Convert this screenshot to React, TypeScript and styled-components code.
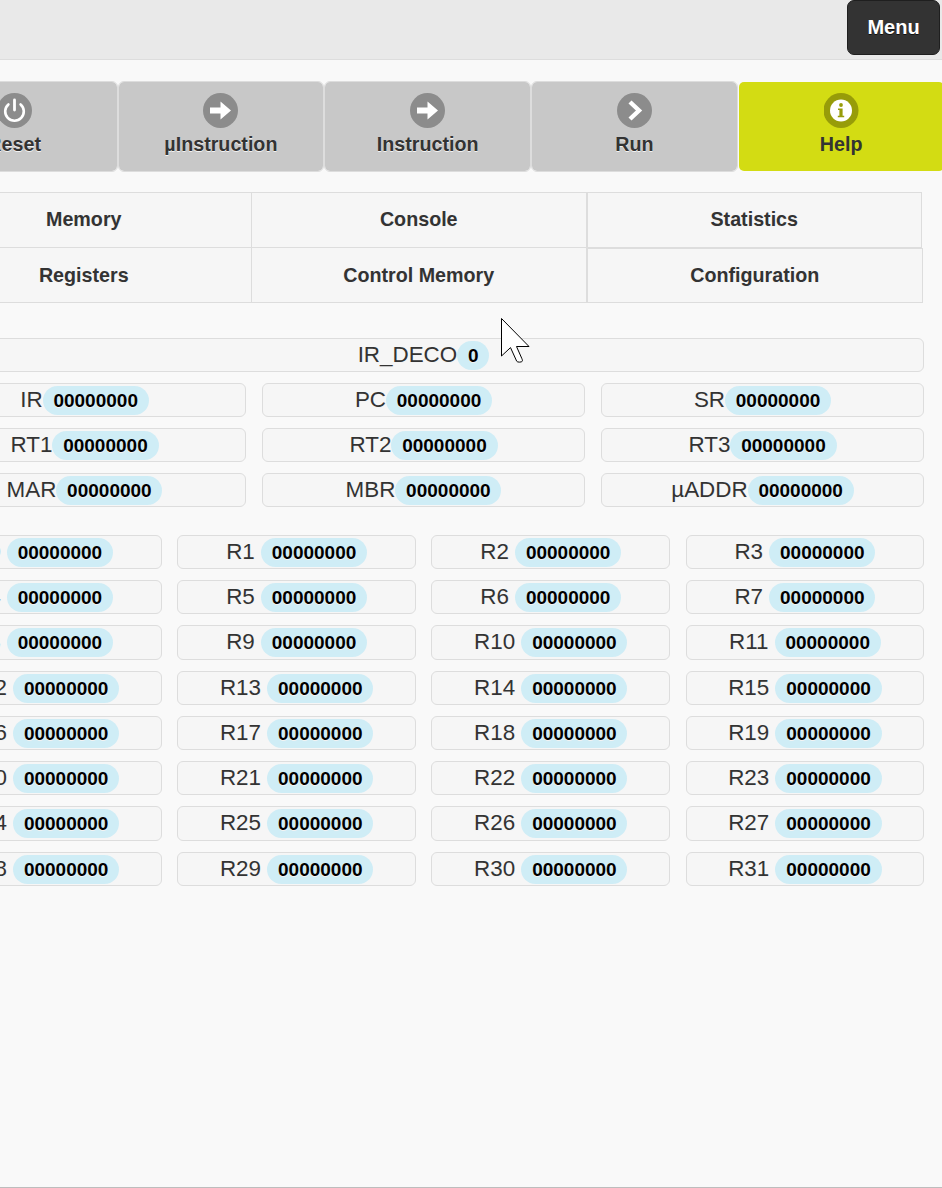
import React from "react"
import styled, { createGlobalStyle } from "styled-components"

const GlobalStyle = createGlobalStyle`
    html, body {
        margin: 0;
        padding: 0;
        background: #f9f9f9;
    }
    body {
        font-family: "Liberation Sans", Arial, sans-serif;
        color: #333;
        text-shadow: 0 1px 0 #f3f3f3;
    }
`;

const upperRegisters = ["IR", "PC", "SR", "RT1", "RT2", "RT3", "MAR", "MBR", "µADDR"]
const generalRegisters = Array.from({ length: 32 }, (_, i) => `R${i}`)

const PowerIcon = () => (
    <svg width="35" height="35" viewBox="0 0 35 35">
        <circle cx="17.5" cy="17.5" r="17.5" fill="#8c8c8c" />
        <path d="M11.4 11.4a9.3 9.3 0 1 0 12.2 0" fill="none" stroke="#fff" strokeWidth="2.6" strokeLinecap="round" />
        <path d="M17.5 7v10" fill="none" stroke="#fff" strokeWidth="2.8" strokeLinecap="round" />
    </svg>
)

const ArrowIcon = () => (
    <svg width="35" height="35" viewBox="0 0 35 35">
        <circle cx="17.5" cy="17.5" r="17.5" fill="#8c8c8c" />
        <path d="M7 14.5h10.5V8.5l10.5 9-10.5 9v-6H7z" fill="#fff" />
    </svg>
)

const ChevronIcon = () => (
    <svg width="35" height="35" viewBox="0 0 35 35">
        <circle cx="17.5" cy="17.5" r="17.5" fill="#8c8c8c" />
        <path d="M13 9l9 8.5-9 8.5" fill="none" stroke="#fff" strokeWidth="4.4" strokeLinejoin="miter" />
    </svg>
)

const InfoIcon = () => (
    <svg width="35" height="35" viewBox="0 0 35 35">
        <circle cx="17" cy="17.5" r="17.5" fill="#979c09" />
        <circle cx="17" cy="17.5" r="11" fill="#fff" />
        <circle cx="17" cy="12" r="1.9" fill="#979c09" />
        <path d="M14 15.5h4.6v7.2h1.6v1.6h-6.4v-1.6h1.600v-5.600h-1.400z" fill="#979c09" />
    </svg>
)

const App: React.FC = () => {
    return (
        <Viewport>
            <GlobalStyle />
            <Page>
                <Header>
                    <MenuButton>Menu</MenuButton>
                </Header>

                <Toolbar>
                    <ToolButton><PowerIcon />Reset</ToolButton>
                    <ToolButton><ArrowIcon />µInstruction</ToolButton>
                    <ToolButton><ArrowIcon />Instruction</ToolButton>
                    <ToolButton><ChevronIcon />Run</ToolButton>
                    <ToolButton $help><InfoIcon />Help</ToolButton>
                </Toolbar>

                <Tabs>
                    <TabRow>
                        <Tab>Memory</Tab>
                        <Tab>Console</Tab>
                        <Tab $last>Statistics</Tab>
                    </TabRow>
                    <TabRow $wide>
                        <Tab $lower>Registers</Tab>
                        <Tab $lower>Control Memory</Tab>
                        <Tab $lower $last>Configuration</Tab>
                    </TabRow>
                </Tabs>

                <UpperGrid>
                    <RegisterRow $full>
                        IR_DECO<Pill>0</Pill>
                    </RegisterRow>
                    {upperRegisters.map((name) => (
                        <RegisterRow key={name}>
                            {name}<Pill>00000000</Pill>
                        </RegisterRow>
                    ))}
                </UpperGrid>

                <LowerGrid>
                    {generalRegisters.map((name) => (
                        <RegisterRow key={name}>
                            {name} <Pill>00000000</Pill>
                        </RegisterRow>
                    ))}
                </LowerGrid>
            </Page>

            <Cursor width="32" height="48" viewBox="0 0 32 48">
                <path
                    d="M1.5 1.5V39l9-8.4 6.2 13.6c.6 1.3 5 1.2 5.6 0 .4-.8-.2-2-.6-3L16.5 29.5H29z"
                    fill="#fff"
                    stroke="#000"
                    strokeWidth="1"
                />
            </Cursor>
        </Viewport>
    )
}

const Viewport = styled.div`
    position: relative;
    box-sizing: border-box;
    height: 1188px;
    overflow: hidden;
    border-bottom: 1px solid #bdbdbd;
`;

const Page = styled.div`
    display: flex;
    flex-direction: column;
    width: 1033.75px;
    margin-left: -90.25px;
`;

const Header = styled.header`
    box-sizing: border-box;
    display: flex;
    justify-content: flex-end;
    align-items: flex-start;
    height: 60px;
    padding-right: 3.5px;
    background: #e9e9e9;
    border-bottom: 1px solid #ddd;
`;

const MenuButton = styled.button`
    box-sizing: border-box;
    width: 93px;
    height: 55px;
    padding: 0;
    background: #333;
    color: #fff;
    border: 1px solid #1f1f1f;
    border-radius: 7px;
    font-family: inherit;
    font-size: 20px;
    font-weight: bold;
    text-shadow: 0 1px 0 #111;
`;

const Toolbar = styled.nav`
    display: flex;
    margin: 21px 0 0 1px;
`;

const ToolButton = styled.button<{ $help?: boolean }>`
    box-sizing: border-box;
    flex: 0 0 206.75px;
    display: flex;
    flex-direction: column;
    align-items: center;
    height: 91px;
    margin: 0;
    padding: 11px 0 0;
    background: ${(p) => (p.$help ? "#d3dc13" : "#c8c8c8")};
    background-clip: padding-box;
    color: #333;
    border: 1px solid ${(p) => (p.$help ? "transparent" : "#ddd")};
    border-left-width: 1.5px;
    border-right-width: 1.5px;
    border-radius: 6px;
    font-family: inherit;
    font-size: 19.7px;
    font-weight: bold;
    line-height: 32px;
    text-shadow: ${(p) => (p.$help ? "none" : "0 1px 0 #f3f3f3")};
`;

const Tabs = styled.div`
    display: flex;
    flex-direction: column;
    margin: 20px 0 0 7px;
`;

const TabRow = styled.div<{ $wide?: boolean }>`
    display: grid;
    grid-template-columns: 335px 335px ${(p) => (p.$wide ? "336px" : "335px")};
`;

const Tab = styled.div<{ $last?: boolean; $lower?: boolean }>`
    box-sizing: border-box;
    display: flex;
    align-items: center;
    justify-content: center;
    height: ${(p) => (p.$lower ? "55px" : "56px")};
    padding-bottom: ${(p) => (p.$lower ? "0" : "2px")};
    background: #f6f6f6;
    border: 1px solid #ddd;
    border-top-width: ${(p) => (p.$lower && !p.$last ? "0" : "1px")};
    border-left-width: ${(p) => (p.$last ? "1px" : "0")};
    border-right-width: 1px;
    font-size: 19.7px;
    font-weight: bold;
`;

const UpperGrid = styled.section`
    display: grid;
    grid-template-columns: repeat(3, 1fr);
    grid-auto-rows: 34px;
    gap: 11px 16px;
    width: 1001px;
    margin: 35px 0 0 13.25px;
`;

const LowerGrid = styled.section`
    display: grid;
    grid-template-columns: repeat(4, 1fr);
    grid-auto-rows: 34.25px;
    gap: 11px 15.5px;
    width: 1001px;
    margin: 27.8px 0 0 13.45px;
`;

const RegisterRow = styled.div<{ $full?: boolean }>`
    box-sizing: border-box;
    grid-column: ${(p) => (p.$full ? "1 / -1" : "auto")};
    text-align: center;
    white-space: pre-wrap;
    background: #f6f6f6;
    border: 1px solid #ddd;
    border-radius: 6px;
    font-size: 22.4px;
    line-height: 32px;
`;

const Pill = styled.span`
    display: inline-block;
    padding: 0 10.8px;
    height: 29px;
    line-height: 29px;
    vertical-align: top;
    margin-top: 2px;
    background: #cfedf6;
    color: #000;
    border-radius: 15px;
    font-size: 19px;
    font-weight: bold;
`;

const Cursor = styled.svg`
    position: absolute;
    left: 500px;
    top: 317px;
`;

export default App
